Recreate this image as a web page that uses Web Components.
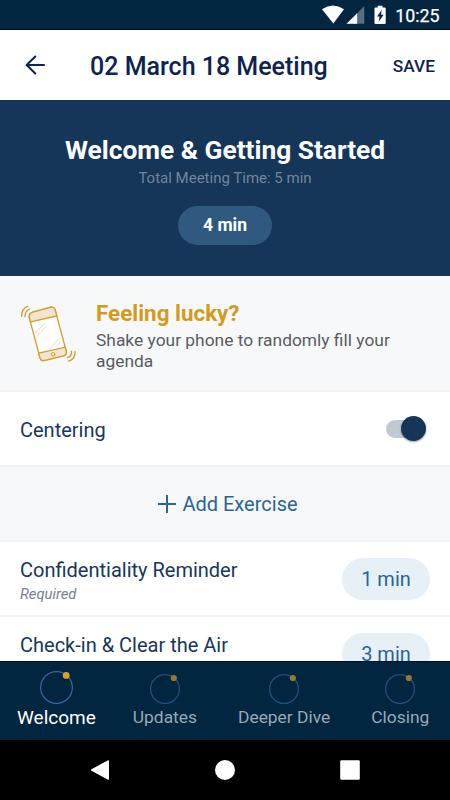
<!DOCTYPE html>
<html lang="en">
<head>
<meta charset="utf-8">
<title>02 March 18 Meeting</title>
<style>
html,body{margin:0;padding:0}
body{width:450px;height:800px;overflow:hidden;font-family:Roboto,"Liberation Sans",sans-serif;background:#fff;color:#15345a}
</style>
</head>
<body>
<meeting-app></meeting-app>
<script>
const define = (name, css, html) => customElements.define(name, class extends HTMLElement {
  constructor() {
    super();
    this.attachShadow({ mode: 'open' }).innerHTML = `<style>*{box-sizing:border-box}svg{display:block;flex:none}${css}</style>${html}`;
  }
});

define('status-bar', `
  :host{display:flex;height:30px;flex:none;background:#022540;border-bottom:1px solid #000a18;color:#fff;box-sizing:border-box;justify-content:flex-end;align-items:center;padding-right:10.5px}
  span{font-size:17.8px;line-height:29px;margin-top:1px;font-weight:400;-webkit-text-stroke:.25px #fff}`, `
  <svg width="73.5" height="29" viewBox="0 0 73.5 29">
    <path fill="#fff" d="M0 9.2Q11 1.8 22 9.2L11.3 23.6Z"/>
    <path fill="#566e80" d="M42.3 6V23.7H24.6Z"/>
    <path fill="#fff" d="M35.2 13.2V23.7H24.6Z"/>
    <path fill="#fff" d="M53.6 7.4h2.1v-1.6h4.8v1.6h2q1.2 0 1.2 1.2v14.5q0 1-1.2 1h-8.8q-1.2 0-1.2-1V8.6q0-1.2 1.1-1.2z"/>
    <path fill="#022540" d="M59.8 9.8 55 16.6h2.6l-.9 5.2 4.9-7h-2.7z"/>
  </svg><span><slot></slot></span>`);

define('app-header', `
  :host{display:flex;height:70px;flex:none;background:#fff;color:#0d2350;align-items:center;box-sizing:border-box;padding:0 15px 0 25px}
  .t{font-size:25px;font-weight:500;margin-left:45px;flex:1;white-space:nowrap;line-height:30px;margin-top:3px}
  .s{font-size:17.3px;font-weight:500;line-height:20px;margin-top:1px}`, `
  <svg width="20" height="20" viewBox="0 0 20 20" fill="none" stroke="#0d2350" stroke-width="2" stroke-linecap="round" stroke-linejoin="round"><path d="M19 10H2M10.3 1.5 1.6 10l8.7 8.5"/></svg>
  <div class="t"><slot></slot></div><div class="s"><slot name="action"></slot></div>`);

define('meeting-hero', `
  :host{display:flex;flex-direction:column;align-items:center;height:176px;flex:none;background:#153559;box-sizing:border-box;padding-top:34px}
  h1{margin:0;font-size:26.3px;line-height:32px;font-weight:700;color:#fff;white-space:nowrap}
  p{margin:3px 0 0;font-size:15px;line-height:18px;color:#73859b}
  .pill{margin-top:19px;height:39px;width:94px;border-radius:20px;background:#30597f;color:#fff;font-weight:700;font-size:17.5px;line-height:38px;text-align:center}`, `
  <h1><slot></slot></h1><p><slot name="total"></slot></p><div class="pill"><slot name="time"></slot></div>`);

define('lucky-banner', `
  :host{display:flex;height:116px;flex:none;background:#f7f8fa;border-bottom:2px solid #f1f2f4;box-sizing:border-box;padding:23px 20px 0}
  svg{margin-top:5px}
  .c{margin-left:20px}
  h2{margin:0;font-size:22.4px;line-height:28px;font-weight:700;color:#d49b1b}
  p{margin:3px 0 0;width:310px;font-size:17.4px;line-height:20.5px;color:#5a5c5f}`, `
  <svg width="56" height="62" viewBox="0 0 56 62" fill="none" stroke="#d29d2e" stroke-width="1.3" stroke-linecap="round">
    <path fill="#fff" d="M12.8 8.2 31 3.2Q34 2.6 35 5.4L46.3 47.5Q47 50.5 44.3 51.7L24.8 56.4Q21.2 57.4 20.1 54.2L9.3 13.6Q8.5 9.5 12.8 8.2Z"/>
    <path fill="#f1e5d0" d="M12.8 8.2 31 3.2Q34 2.6 35 5.4L36.8 12 10.5 18 9.3 13.6Q8.5 9.5 12.8 8.2ZM18.7 49.2 45.2 43.2 46.3 47.5Q47 50.5 44.3 51.7L24.8 56.4Q21.2 57.4 20.1 54.2Z"/>
    <circle cx="33.1" cy="50.3" r="1.8" stroke-width="1"/>
    <path stroke="#efdcb8" stroke-width="1" d="M14.5 30 24 20M16.5 33 20 29M22 27 26 22.5M30 44.5 40 33.5M36 42.5 40 38"/>
    <path d="M1.6 12.4Q1.5 4.7 7.8 2.1M5 12.7Q5 7 9.4 5M48.5 57.2Q55.7 55 54.9 47.4M47.6 53.6Q52 52.2 51.4 47.2"/>
  </svg>
  <div class="c"><h2><slot></slot></h2><p><slot name="text"></slot></p></div>`);

define('agenda-row', `
  :host{display:flex;height:75px;flex:none;background:#fff;border-bottom:2px solid #f1f2f4;box-sizing:border-box;padding:0 20px;justify-content:space-between;align-items:center}
  .c{padding-top:var(--label-drop,4px)}
  .l{font-size:20px;line-height:24px;color:#17365a;white-space:nowrap}
  ::slotted([slot=note]){display:block;min-height:18px;font-size:14.8px;line-height:18px;font-style:italic;color:#79828b;margin-top:3px}`, `
  <div class="c"><div class="l"><slot></slot></div><slot name="note"></slot></div><slot name="end"></slot>`);

define('toggle-switch', `
  :host{display:block;width:40px;height:26px;position:relative;margin-right:4px}
  i{position:absolute;left:0;top:4px;width:34px;height:18px;border-radius:9px;background:#c1cad3}
  b{position:absolute;right:0;top:0;width:25px;height:25px;border-radius:50%;background:#153559;box-shadow:0 1px 2px #0006}`, `<i></i><b></b>`);

define('time-pill', `
  :host{display:block;width:88px;height:42px;border-radius:21px;background:#e7eff7;color:#286693;font-size:20px;line-height:42px;text-align:center}`, `<slot></slot>`);

define('add-button', `
  :host{display:flex;height:75px;flex:none;background:#f7f8fa;border-bottom:2px solid #f1f2f4;box-sizing:border-box;justify-content:center;align-items:center;color:#286693;font-size:20px;line-height:24px;gap:6px;padding-left:6px}`, `
  <svg width="18" height="18" viewBox="0 0 18 18" stroke="#286693" stroke-width="2"><path d="M9 0V18M0 9H18"/></svg><span><slot></slot></span>`);

define('nav-tab', `
  :host{display:flex;flex-direction:column;align-items:center;justify-content:flex-end;color:#9aa8b4;font-size:17.4px;line-height:20px;white-space:nowrap;padding-bottom:1px;--r:#234f79;--d:#98782e;--s:30px;--w:1.3}
  :host([active]){color:#fff;font-size:19px;padding-bottom:0;--r:#39699a;--d:#dba125;--s:33px;--w:1.1}
  svg{width:var(--s);height:var(--s);overflow:visible;margin-bottom:3px}
  :host([active]) svg{margin-bottom:4px}`, `
  <svg viewBox="0 0 30 30"><circle cx="15" cy="15" r="14.4" fill="none" stroke="var(--r)" stroke-width="var(--w)"/><circle cx="23.8" cy="4" r="3.1" fill="var(--d)"/></svg><span><slot></slot></span>`);

define('tab-bar', `
  :host{display:flex;height:79px;flex:none;background:#022540;box-sizing:border-box;border-top:1px solid #001127;padding:0 0 12px 17px;gap:41px}
  ::slotted(:nth-child(2)){margin-left:-4px}`, `<slot></slot>`);

define('system-nav', `
  :host{display:flex;height:60px;flex:none;background:#000;justify-content:center;align-items:center;gap:105px}`, `
  <svg width="20" height="20"><path fill="#fff" d="M18 .2Q19 0 19 1V19Q19 20 18 19.8L1.5 10.8Q.5 10 1.5 9.2Z"/></svg>
  <svg width="20" height="20"><circle cx="10" cy="10" r="10" fill="#fff"/></svg>
  <svg width="20" height="20"><rect x=".2" y=".2" width="19.6" height="19.6" rx="1.2" fill="#fff"/></svg>`);

define('meeting-app', `
  :host{display:flex;flex-direction:column;width:450px;height:800px}
  main{flex:1;min-height:0;overflow:hidden;display:flex;flex-direction:column}
  .single{--label-drop:2px}`, `
  <status-bar>10:25</status-bar>
  <app-header>02 March 18 Meeting<span slot="action">SAVE</span></app-header>
  <main>
    <meeting-hero>Welcome &amp; Getting Started<span slot="total">Total Meeting Time: 5 min</span><span slot="time">4 min</span></meeting-hero>
    <lucky-banner>Feeling lucky?<span slot="text">Shake your phone to randomly fill your agenda</span></lucky-banner>
    <agenda-row class="single">Centering<toggle-switch slot="end"></toggle-switch></agenda-row>
    <add-button>Add Exercise</add-button>
    <agenda-row>Confidentiality Reminder<span slot="note">Required</span><time-pill slot="end">1 min</time-pill></agenda-row>
    <agenda-row>Check-in &amp; Clear the Air<span slot="note"></span><time-pill slot="end">3 min</time-pill></agenda-row>
  </main>
  <tab-bar><nav-tab active>Welcome</nav-tab><nav-tab>Updates</nav-tab><nav-tab>Deeper Dive</nav-tab><nav-tab>Closing</nav-tab></tab-bar>
  <system-nav></system-nav>`);
</script>
</body>
</html>
